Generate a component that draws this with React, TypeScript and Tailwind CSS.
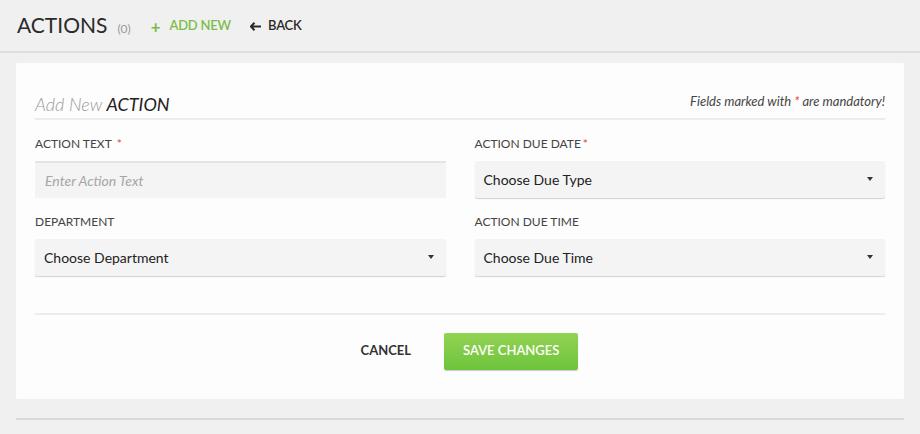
const font = { fontFamily: 'Lato, "Open Sans", sans-serif' };

const Caret = () => (
  <svg className="h-[4px] w-[6px]" viewBox="0 0 6 4">
    <path d="M0 0h6L3 4z" fill="#333" />
  </svg>
);

const SelectBox = ({ label }: { label: string }) => (
  <div className="flex h-[37px] items-center justify-between rounded-[2px] bg-[#f4f4f4] pl-[9px] pr-[12px] shadow-[0_1px_1px_rgba(0,0,0,0.18)]">
    <span className="text-[14px] text-[#222]">{label}</span>
    <Caret />
  </div>
);

const Label = ({ text, required, tight }: { text: string; required?: boolean; tight?: boolean }) => (
  <div className="mb-[9px] text-[12px] uppercase leading-[16px] text-[#444]">
    {text}
    {required && <span className={`${tight ? 'ml-[2px]' : 'ml-[5px]'} text-[#e0453a]`}>*</span>}
  </div>
);

export default function App() {
  return (
    <div className="min-h-[434px] w-[920px] bg-[#f0f0f0]" style={font}>
      <div className="flex h-[53px] items-center border-b-2 border-[#dedede] pl-[17px] pt-[1px]">
        <div className="flex items-baseline">
          <h1 className="text-[21px] leading-none text-[#2a2a2a]">ACTIONS</h1>
          <span className="ml-[10px] text-[12px] text-[#9a9a9a]">(0)</span>
        </div>
        <a className="ml-[20px] flex items-center gap-[9px] text-[13px] font-semibold tracking-[-0.2px] text-[#7cbd4a]">
          <span className="text-[17px] font-bold leading-none">+</span>
          ADD NEW
        </a>
        <a className="ml-[19px] flex items-center gap-[7px] text-[13px] font-semibold tracking-[-0.2px] text-[#2a2a2a]">
          <svg className="h-[9px] w-[11px]" viewBox="0 0 11 9">
            <path d="M4.5 0.7L0.9 4.5l3.6 3.8M1 4.5h10" stroke="#2a2a2a" strokeWidth="2" fill="none" />
          </svg>
          BACK
        </a>
      </div>

      <div className="mx-[16px] mt-[10px] rounded-[2px] bg-[#fdfdfd] px-[19px] pb-[29px] pt-[29px]">
        <div className="flex items-end justify-between border-b-2 border-[#ececec] pb-[3px]">
          <div className="text-[18px] italic leading-[22px]">
            <span className="font-light text-[#9b9b9b]">Add New </span>
            <span className="text-[#222]">ACTION</span>
          </div>
          <div className="mb-[3px] text-[13px] italic text-[#444]">
            Fields marked with <span className="text-[#e0453a]">*</span> are mandatory!
          </div>
        </div>

        <div className="mt-[16px] grid grid-cols-2 gap-x-[29px] gap-y-[16px]">
          <div>
            <Label text="Action Text" required />
            <div className="flex h-[37px] items-center border-t-2 border-[#e4e4e4] bg-[#f4f4f4] px-[10px]">
              <span className="text-[14px] italic text-[#a6a6a6]">Enter Action Text</span>
            </div>
          </div>
          <div>
            <Label text="Action Due Date" required tight />
            <SelectBox label="Choose Due Type" />
          </div>
          <div>
            <Label text="Department" />
            <SelectBox label="Choose Department" />
          </div>
          <div>
            <Label text="Action Due Time" />
            <SelectBox label="Choose Due Time" />
          </div>
        </div>

        <div className="mt-[37px] border-t-2 border-[#ececec]" />

        <div className="mt-[18px] flex items-center justify-center pl-[19px]">
          <button className="text-[13px] font-bold text-[#333]">CANCEL</button>
          <button className="ml-[33px] h-[37px] rounded-[2px] bg-gradient-to-b from-[#93d253] to-[#6cc43b] px-[19px] text-[13px] font-semibold text-white shadow-[0_1px_1px_rgba(0,0,0,0.2)]">
            SAVE CHANGES
          </button>
        </div>
      </div>

      <div className="mx-[16px] mt-[19px] h-[2px] bg-[#d9d9d9]" />
    </div>
  );
}
